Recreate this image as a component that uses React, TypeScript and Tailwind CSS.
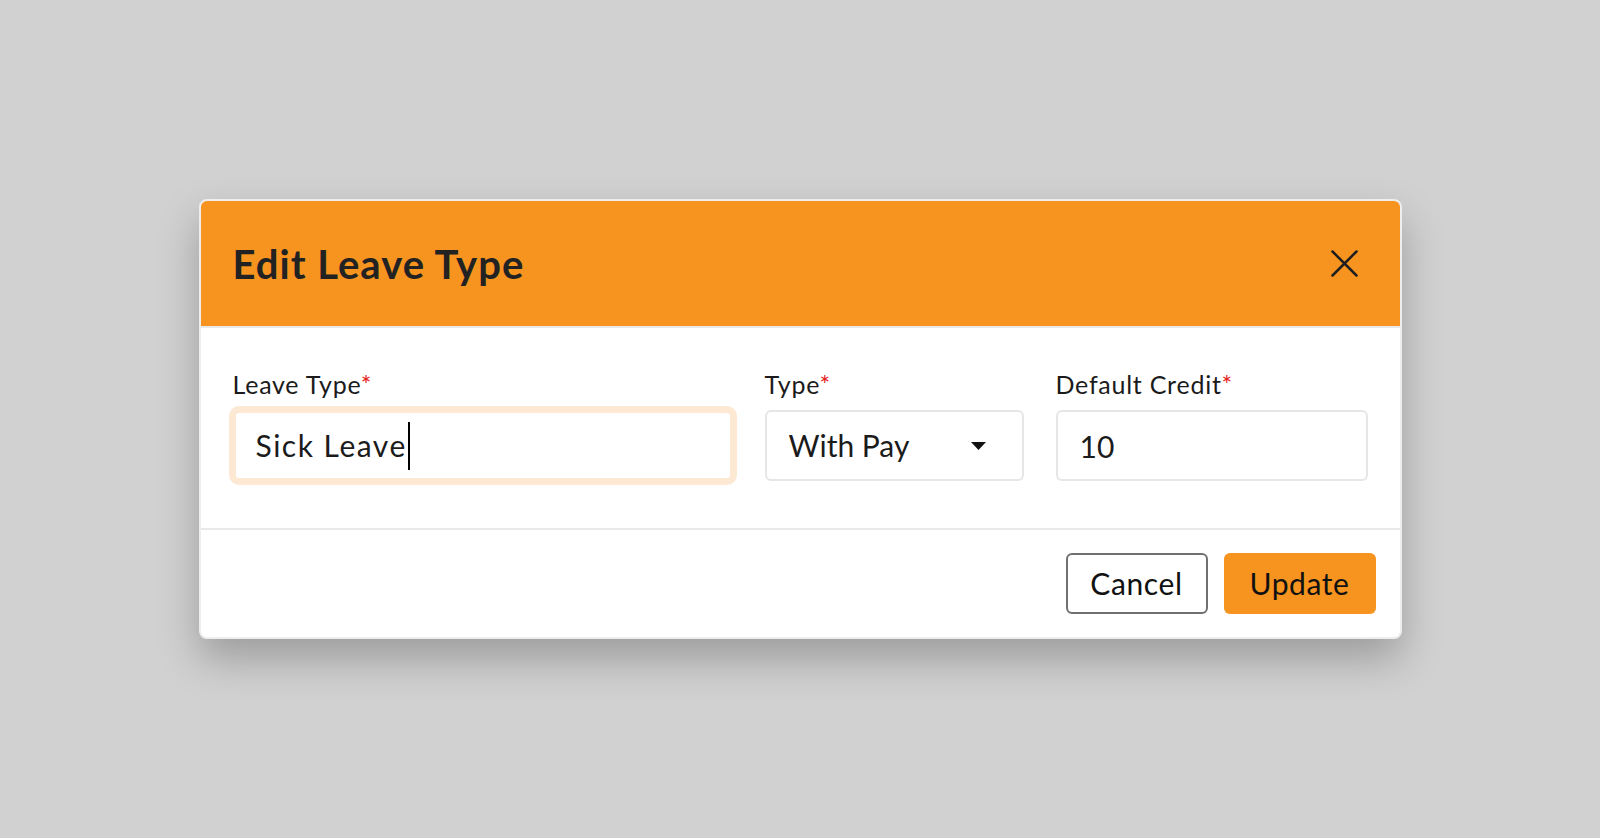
import React from 'react'

const font = { fontFamily: 'Lato, "Noto Sans", sans-serif' }

function Label({ text }: { text: string }) {
  return (
    <label className="mb-[10px] block text-[25px] leading-8 tracking-[0.03em] text-[#1b1b1b]">
      {text}
      <span className="text-[#e4211b]">*</span>
    </label>
  )
}

export default function App() {
  return (
    <div style={font} className="flex h-[838px] w-full items-center justify-center bg-[#d1d1d1]">
      <div className="w-[1203px] overflow-hidden rounded-lg border-2 border-[#eeeeee] bg-white shadow-[0_20px_40px_rgba(0,0,0,0.25)]">
        {/* header */}
        <div className="flex h-[127px] items-center justify-between border-b-2 border-[#e9e9e9] bg-[#f7931f] pl-8 pr-[42px]">
          <h2 className="text-[40px] font-bold leading-[48px] tracking-[0.025em] text-[#222222]">Edit Leave Type</h2>
          <button className="flex h-[27px] w-[27px] items-center justify-center" aria-label="Close">
            <svg width="27" height="27" viewBox="0 0 27 27" fill="none" stroke="#1f1f1f" strokeWidth="2.5" strokeLinecap="round">
              <path d="M1.5 1.5 L25.5 25.5 M25.5 1.5 L1.5 25.5" />
            </svg>
          </button>
        </div>

        {/* body */}
        <div className="grid grid-cols-[500px_259px_1fr] gap-x-8 px-8 pb-[47px] pt-[40px]">
          <div>
            <Label text="Leave Type" />
            <div className="flex h-[71px] items-center rounded-md border-[3px] border-[#fde8d3] bg-white px-[20px] text-[30px] tracking-[0.05em] text-[#1b1b1b] ring-4 ring-[#fde8d3]">
              <span>Sick Leave</span>
              <span className="ml-[1px] inline-block h-[48px] w-[2px] bg-black" />
            </div>
          </div>
          <div>
            <Label text="Type" />
            <div className="relative">
              <select
                defaultValue="With Pay"
                className="h-[71px] w-full appearance-none rounded-md border-2 border-[#e6e6e6] bg-white px-[22px] text-[30px] text-[#1b1b1b] outline-none"
                style={font}
              >
                <option>With Pay</option>
                <option>Without Pay</option>
              </select>
              <svg className="pointer-events-none absolute right-[38px] top-[32px]" width="15" height="8" viewBox="0 0 15 8">
                <path d="M0 0 H15 L7.5 8 Z" fill="#111111" />
              </svg>
            </div>
          </div>
          <div>
            <Label text="Default Credit" />
            <input
              readOnly
              value="10"
              className="h-[71px] w-full rounded-md border-2 border-[#e6e6e6] bg-white px-[22px] text-[30px] text-[#1b1b1b] outline-none"
              style={font}
            />
          </div>
        </div>

        {/* footer */}
        <div className="flex justify-end gap-4 border-t-2 border-[#e9e9e9] pb-[23px] pr-[24px] pt-[23px]">
          <button className="h-[61px] w-[142px] rounded-md border-2 border-[#707070] bg-white text-[30px] tracking-[0.02em] text-[#111111]">
            Cancel
          </button>
          <button className="h-[61px] w-[152px] rounded-md bg-[#f7931f] text-[30px] tracking-[0.02em] text-[#111111]">
            Update
          </button>
        </div>
      </div>
    </div>
  )
}
